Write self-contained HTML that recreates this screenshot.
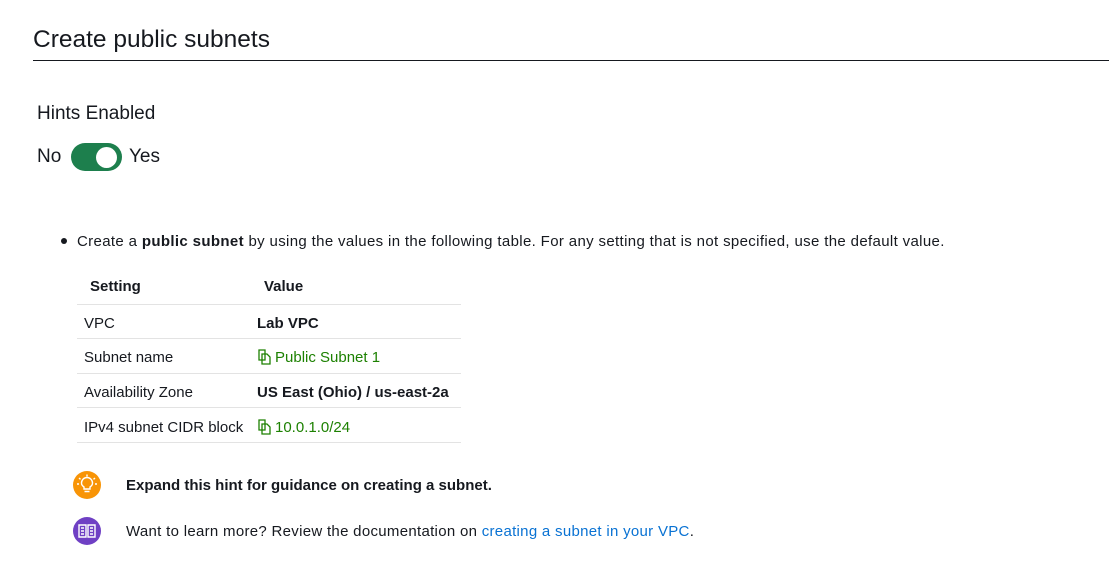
<!DOCTYPE html>
<html><head><style>
body{margin:0;width:1109px;height:564px;background:#fff;font-family:"Liberation Sans",sans-serif;color:#16191f;position:relative;overflow:hidden}
.a{position:absolute;white-space:nowrap}
.t{font-size:15px}
.g{color:#1d8102}
b{font-weight:bold}
.ln{position:absolute;left:77px;width:384px;height:1px;background:#e3e3e3}
.cp{display:inline-block;vertical-align:-3px;margin-right:3px}
</style></head><body>
<div class="a" style="left:33px;top:26px;font-size:24.5px">Create public subnets</div>
<div style="position:absolute;left:33px;top:60px;width:1076px;height:1px;background:#16191f"></div>
<div class="a" style="left:37px;top:103px;font-size:19px">Hints Enabled</div>
<div class="a" style="left:37px;top:146px;font-size:19px">No</div>
<div style="position:absolute;left:71px;top:143px;width:51px;height:28px;border-radius:14px;background:#1d7f4d"></div>
<div style="position:absolute;left:96px;top:147px;width:21px;height:21px;border-radius:50%;background:#fff"></div>
<div class="a" style="left:129px;top:146px;font-size:19px">Yes</div>
<div style="position:absolute;left:61px;top:238px;width:6px;height:6px;border-radius:50%;background:#16191f"></div>
<div class="a t" style="left:77px;top:233px;letter-spacing:0.35px">Create a <b>public subnet</b> by using the values in the following table. For any setting that is not specified, use the default value.</div>
<div class="a t" style="left:90px;top:278px"><b>Setting</b></div>
<div class="a t" style="left:264px;top:278px"><b>Value</b></div>
<div class="ln" style="top:304px"></div>
<div class="a t" style="left:84px;top:315px">VPC</div>
<div class="a t" style="left:257px;top:315px"><b>Lab VPC</b></div>
<div class="ln" style="top:338px"></div>
<div class="a t" style="left:84px;top:349px">Subnet name</div>
<div class="a t g" style="left:257px;top:349px"><svg class="cp" width="15" height="16" viewBox="0 0 15 16" fill="none" stroke="#1d8102" stroke-width="1.3"><path d="M2 1h6v10H2z"/><path d="M5 5h5l3 3v7H5z"/></svg>Public Subnet 1</div>
<div class="ln" style="top:373px"></div>
<div class="a t" style="left:84px;top:384px">Availability Zone</div>
<div class="a t" style="left:257px;top:384px"><b>US East (Ohio) / us-east-2a</b></div>
<div class="ln" style="top:407px"></div>
<div class="a t" style="left:84px;top:419px">IPv4 subnet CIDR block</div>
<div class="a t g" style="left:257px;top:419px"><svg class="cp" width="15" height="16" viewBox="0 0 15 16" fill="none" stroke="#1d8102" stroke-width="1.3"><path d="M2 1h6v10H2z"/><path d="M5 5h5l3 3v7H5z"/></svg>10.0.1.0/24</div>
<div class="ln" style="top:442px"></div>
<svg style="position:absolute;left:73px;top:471px" width="28" height="28" viewBox="0 0 28 28"><circle cx="14" cy="14" r="14" fill="#f89406"/><g stroke="#fff" stroke-width="1.4" fill="none"><path d="M11 18v-2c-1.5-1-2.5-2.3-2.5-4a5.5 5.5 0 0111 0c0 1.7-1 3-2.5 4v2zM11.5 20.5h5"/><path d="M14 3.5v2M6 7l1.5 1.3M22 7l-1.5 1.3M4 13h2M22 13h2"/></g></svg>
<div class="a t" style="left:126px;top:477px"><b>Expand this hint for guidance on creating a subnet.</b></div>
<svg style="position:absolute;left:73px;top:517px" width="28" height="28" viewBox="0 0 28 28"><circle cx="14" cy="14" r="14" fill="#6f40c4"/><g stroke="#fff" stroke-width="1.4" fill="none"><path d="M6 8h7v12H6zM15 8h7v12h-7z"/><path d="M8 11h3M8 14h3M8 17h3M17 11h3M17 14h3M17 17h3"/></g></svg>
<div class="a t" style="left:126px;top:523px;letter-spacing:0.3px">Want to learn more? Review the documentation on <span style="color:#0972d3">creating a subnet in your VPC</span>.</div>
</body></html>
